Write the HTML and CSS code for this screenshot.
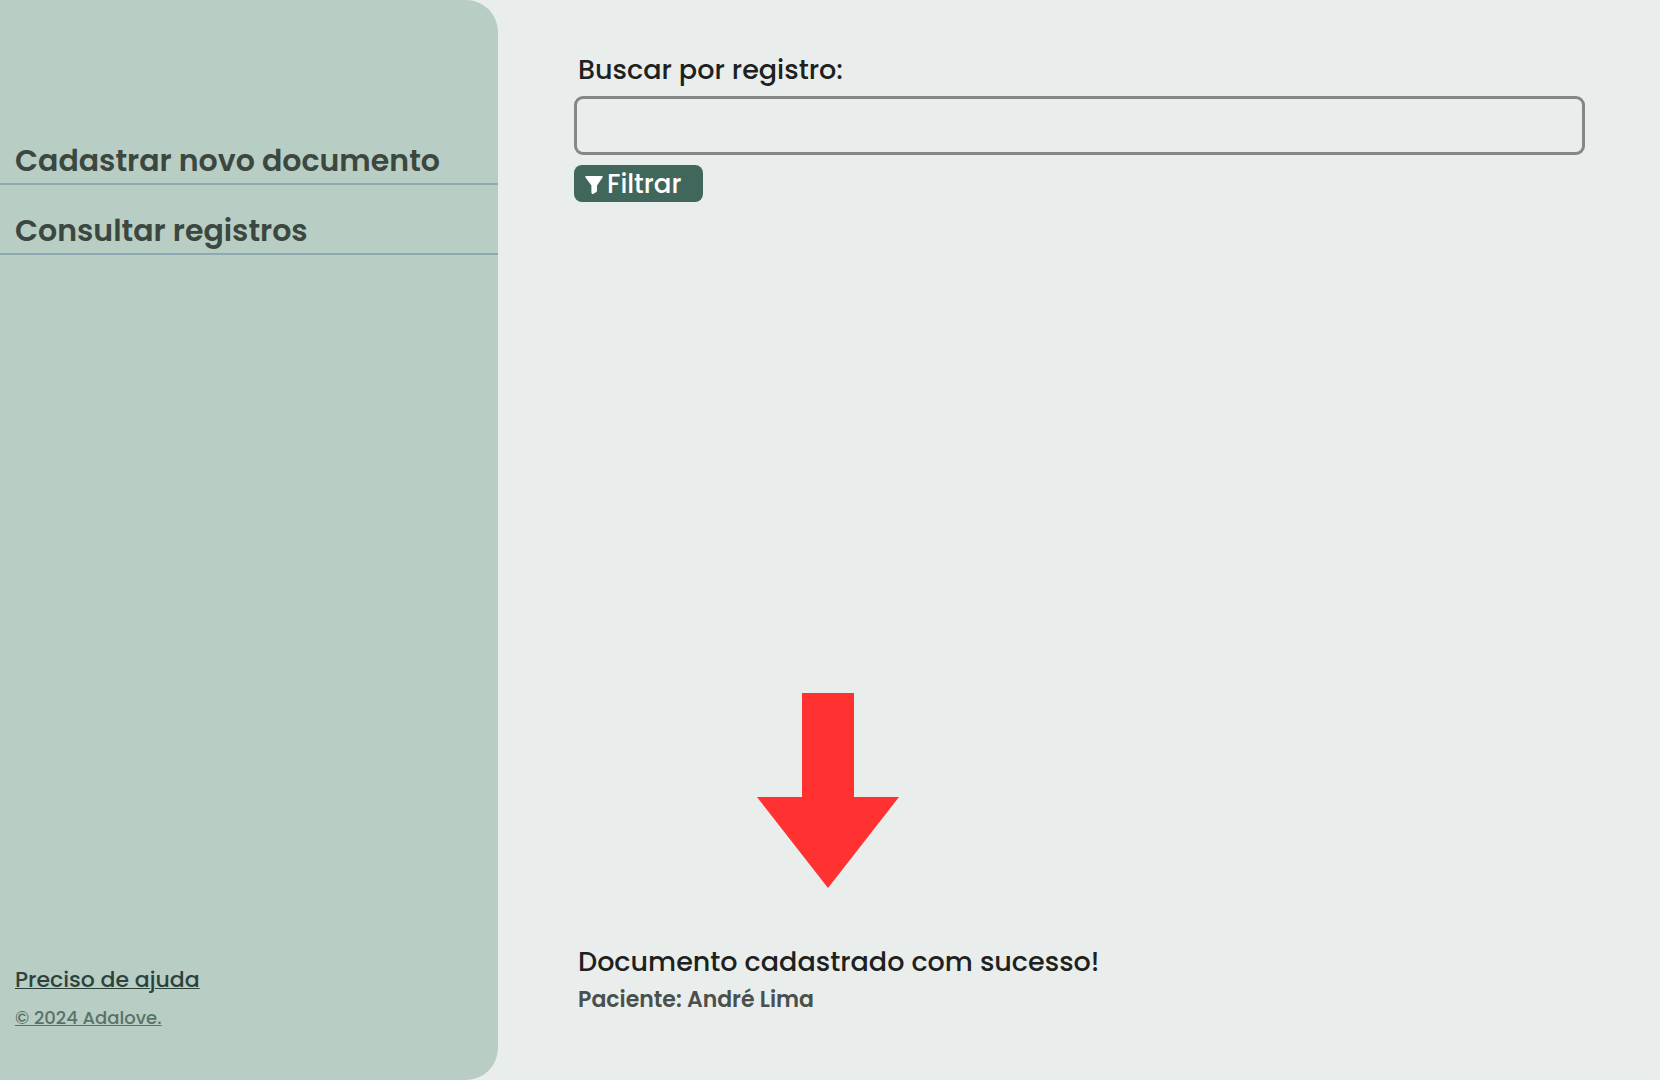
FILE: index.html
```html
<!DOCTYPE html>
<html lang="pt-BR">
<head>
  <meta charset="utf-8">
  <meta name="viewport" content="width=device-width, initial-scale=1">
  <title>Consultar registros</title>
  <link rel="stylesheet" href="styles.css">
</head>
<body>
  <div class="layout">
    <aside class="sidebar">
      <nav class="menu">
        <a class="menu-link" href="#cadastrar">Cadastrar novo documento</a>
        <a class="menu-link" href="#consultar">Consultar registros</a>
      </nav>
      <footer class="sidebar-footer">
        <a class="help-link" href="#ajuda">Preciso de ajuda</a>
        <a class="copyright" href="#sobre">© 2024 Adalove.</a>
      </footer>
    </aside>
    <main class="content">
      <form class="search">
        <label class="search-label" for="registro">Buscar por registro:</label>
        <input class="search-input" id="registro" type="text">
        <button class="filter-button" type="button">
          <svg class="filter-icon" viewBox="0 0 18 18" aria-hidden="true">
            <path d="M1 0H17Q18.3 .2 17.5 1.6L12 9.6V14.6Q12 15.4 11.4 15.9L8.4 17.8Q6.6 18.5 6.4 16.8V9.6L.5 1.6Q-.3 .2 1 0Z" fill="currentColor"/>
          </svg>
          <span>Filtrar</span>
        </button>
      </form>
      <section class="notice">
        <svg class="arrow" viewBox="0 0 142 195" aria-hidden="true">
          <path d="M45 0H97V104H142L71 195L0 104H45Z" fill="#ff3131"/>
        </svg>
        <p class="notice-title">Documento cadastrado com sucesso!</p>
        <p class="notice-detail">Paciente: André Lima</p>
      </section>
    </main>
  </div>
</body>
</html>
```
FILE: styles.css
```css
* {
  box-sizing: border-box;
}

body {
  margin: 0;
  background: #e9eeec;
  color: #1d2120;
  font-family: Poppins, Inter, sans-serif;
  font-weight: 500;
}

.layout {
  display: grid;
  grid-template-columns: 30% 1fr;
  min-height: 100vh;
}

.sidebar {
  display: flex;
  flex-direction: column;
  justify-content: space-between;
  padding: 135px 0 48px;
  background: #b8cdc4;
  border-radius: 0 32px 32px 0;
}

.menu {
  display: flex;
  flex-direction: column;
  gap: 20px;
}

.menu-link {
  padding: 5px 15px 1px;
  border-bottom: 2px solid #8ea9b4;
  color: #3b473f;
  font-size: 30px;
  font-weight: 600;
  line-height: 42px;
  text-decoration: none;
}

.sidebar-footer {
  display: flex;
  flex-direction: column;
  align-items: flex-start;
  gap: 6px;
  padding-left: 15px;
}

.help-link {
  color: #2e423c;
  font-size: 22px;
  line-height: 36px;
  text-decoration-thickness: 1px;
}

.copyright {
  color: #5b7268;
  font-size: 18px;
  line-height: 28px;
  text-decoration-thickness: 1px;
}

.content {
  display: flex;
  flex-direction: column;
  justify-content: space-between;
  padding: 50px 75px 62px 76px;
}

.search {
  display: flex;
  flex-direction: column;
  align-items: flex-start;
}

.search-label {
  padding-left: 4px;
  margin-bottom: 6px;
  font-size: 27px;
  line-height: 40px;
}

.search-input {
  width: 100%;
  height: 59px;
  margin-bottom: 10px;
  padding: 0 16px;
  border: 3px solid #838885;
  border-radius: 9px;
  background: transparent;
  color: inherit;
  font: inherit;
  font-size: 24px;
}

.filter-button {
  display: flex;
  align-items: center;
  gap: 4px;
  height: 37px;
  padding: 2px 22px 0 11px;
  border: 0;
  border-radius: 8px;
  background: #41665c;
  color: #fff;
  font: inherit;
  font-size: 26px;
}

.filter-icon {
  width: 18px;
  height: 18px;
}

.notice {
  padding-left: 4px;
}

.arrow {
  display: block;
  width: 142px;
  margin: 0 0 54px 179px;
}

.notice-title,
.notice-detail {
  margin: 0;
}

.notice-title {
  font-size: 27px;
  line-height: 40px;
}

.notice-detail {
  color: #4a504d;
  font-size: 22px;
  font-weight: 600;
  line-height: 36px;
}
```
